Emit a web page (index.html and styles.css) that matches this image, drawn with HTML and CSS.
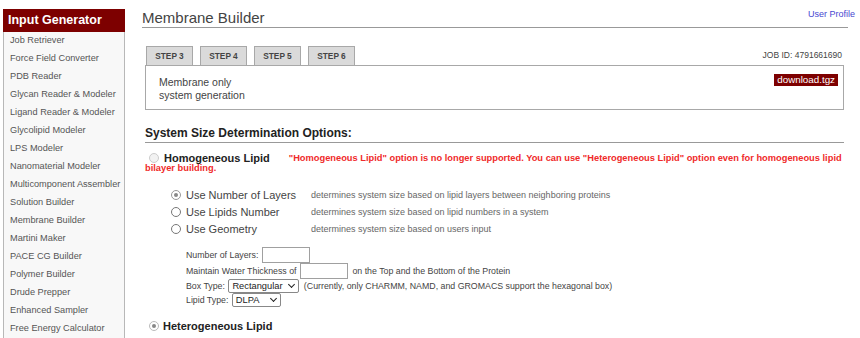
FILE: index.html
```html
<!DOCTYPE html>
<html>
<head>
<meta charset="utf-8">
<link rel="stylesheet" href="styles.css">
</head>
<body>
<div class="page">
  <nav class="sidebar">
    <div class="side-head">Input Generator</div>
    <ul class="side-list">
      <li>Job Retriever</li>
      <li>Force Field Converter</li>
      <li>PDB Reader</li>
      <li>Glycan Reader &amp; Modeler</li>
      <li>Ligand Reader &amp; Modeler</li>
      <li>Glycolipid Modeler</li>
      <li>LPS Modeler</li>
      <li>Nanomaterial Modeler</li>
      <li>Multicomponent Assembler</li>
      <li>Solution Builder</li>
      <li>Membrane Builder</li>
      <li>Martini Maker</li>
      <li>PACE CG Builder</li>
      <li>Polymer Builder</li>
      <li>Drude Prepper</li>
      <li>Enhanced Sampler</li>
      <li>Free Energy Calculator</li>
    </ul>
  </nav>
  <main class="main">
    <div class="title-row">
      <h1 class="title">Membrane Builder</h1>
      <a class="profile">User Profile</a>
    </div>
    <div class="tabs-row">
      <div class="tabs">
        <span class="tab">STEP 3</span>
        <span class="tab">STEP 4</span>
        <span class="tab">STEP 5</span>
        <span class="tab">STEP 6</span>
      </div>
      <div class="jobid">JOB ID: 4791661690</div>
    </div>
    <div class="stepbox">
      <div class="stepdesc">Membrane only<br>system generation</div>
      <span class="download">download.tgz</span>
    </div>
    <h2 class="section">System Size Determination Options:</h2>
    <div class="homo">
      <div class="homo-line">
        <span class="radio big disabled"></span>
        <span class="homo-label">Homogeneous Lipid</span>
        <span class="warn">"Homogeneous Lipid" option is no longer supported. You can use "Heterogeneous Lipid" option even for homogeneous lipid</span>
      </div>
      <div class="warn warn-cont">bilayer building.</div>
    </div>
    <div class="opts">
      <div class="opt"><span class="radio checked-gray"></span><span class="opt-label">Use Number of Layers</span><span class="opt-desc">determines system size based on lipid layers between neighboring proteins</span></div>
      <div class="opt"><span class="radio"></span><span class="opt-label">Use Lipids Number</span><span class="opt-desc">determines system size based on lipid numbers in a system</span></div>
      <div class="opt"><span class="radio"></span><span class="opt-label">Use Geometry</span><span class="opt-desc">determines system size based on users input</span></div>
    </div>
    <div class="fields">
      <div class="field">Number of Layers: <span class="input w48"></span></div>
      <div class="field">Maintain Water Thickness of <span class="input w48"></span> on the Top and the Bottom of the Protein</div>
      <div class="field">Box Type: <span class="select w71">Rectangular <span class="chev"></span></span> (Currently, only CHARMM, NAMD, and GROMACS support the hexagonal box)</div>
      <div class="field">Lipid Type: <span class="select w49">DLPA <span class="chev"></span></span></div>
    </div>
    <div class="hetero">
      <span class="radio big checked-gray"></span>
      <span class="homo-label">Heterogeneous Lipid</span>
    </div>
  </main>
</div>
</body>
</html>
```

FILE: styles.css
```css
* { box-sizing: border-box; }
html, body { margin: 0; padding: 0; background: #fff; }
body { font-family: "Liberation Sans", Arial, sans-serif; color: #333; overflow: hidden; width: 860px; height: 338px; }
.page { display: flex; align-items: flex-start; }
.sidebar {
  width: 122px;
  margin: 9px 0 0 3px;
  border: 1px solid #b8b8b8;
  border-top: none;
  background: #f8f8f8;
  flex: none;
}
.side-head {
  height: 23px;
  background: #7d0000;
  color: #fff;
  font-weight: bold;
  font-size: 12.5px;
  line-height: 23px;
  padding-left: 5px;
  margin: 0 -1px;
}
.side-list { list-style: none; margin: 0; padding: 0; }
.side-list li {
  font-size: 9.2px;
  color: #555;
  height: 18px;
  line-height: 17px;
  padding-left: 6px;
  white-space: nowrap;
}
.main { flex: 1; margin-left: 17px; margin-right: 5px; }
.title-row {
  display: flex;
  justify-content: space-between;
  align-items: flex-start;
  border-bottom: 1px solid #999;
  height: 28px;
  margin-right: 7px;
}
.title {
  margin: 9px 0 0 0;
  font-size: 15px;
  font-weight: normal;
  color: #444;
  line-height: 18px;
}
.profile { font-size: 9px; color: #4848d0; margin-top: 9px; margin-right: -7px; }
.tabs-row { display: flex; justify-content: space-between; align-items: flex-end; margin-top: 18px; margin-left: 4px; margin-right: 13px; }
.tabs { display: flex; gap: 7px; }
.tab {
  display: block;
  width: 47px;
  height: 19px;
  background: #dadada;
  border: 1px solid #a8a8a8;
  border-bottom: none;
  font-size: 8.3px;
  font-weight: bold;
  color: #444;
  text-align: center;
  line-height: 18px;
}
.jobid { font-size: 8.5px; color: #444; margin-bottom: 5px; }
.stepbox {
  margin-left: 3px;
  margin-right: 11px;
  height: 45px;
  border: 1px solid #a8a8a8;
  display: flex;
  justify-content: space-between;
  padding: 8px 8px 0 13px;
}
.stepdesc { font-size: 10.5px; color: #444; line-height: 12.5px; padding-top: 2px; }
.download {
  align-self: flex-start;
  background: #7d0000;
  color: #fff;
  font-size: 9.8px;
  line-height: 11px;
  height: 12px;
  padding: 0 3px;
  margin-right: -3px;
}
.section {
  margin: 16px 11px 0 3px;
  font-size: 12px;
  font-weight: bold;
  color: #222;
  border-bottom: 1px solid #999;
  padding-bottom: 2px;
  line-height: 14px;
}
.homo { margin: 9px 0 0 3px; font-size: 9.3px; padding-right: 6px; }
.homo-line { display: flex; align-items: center; height: 12px; white-space: nowrap; }
.radio {
  display: inline-block;
  width: 10px;
  height: 10px;
  border: 1px solid #777;
  border-radius: 50%;
  background: #fff;
  vertical-align: -1px;
  position: relative;
  flex: none;
}
.radio.disabled { border-color: #ccc; background: #f2f2f2; }
.radio.checked-gray { border-color: #999; }
.radio.checked-gray::after {
  content: "";
  position: absolute;
  left: 2px; top: 2px;
  width: 4px; height: 4px;
  border-radius: 50%;
  background: #888;
}
.homo .radio { margin-left: 4px; margin-right: 5px; }
.homo-label { font-size: 11px; font-weight: bold; color: #222; }
.homo .homo-label { margin-right: 19px; }
.warn { color: #f02a2a; font-weight: bold; font-size: 9.3px; }
.warn-cont { line-height: 11px; margin-top: -1px; }
.opts { margin: 12px 0 0 29px; }
.opt { display: flex; align-items: center; height: 17px; }
.opt .radio { margin-right: 5px; }
.opt-label { font-size: 11px; color: #444; width: 125px; }
.opt-desc { font-size: 9px; color: #666; }
.fields { margin: 10px 0 0 44px; font-size: 8.8px; color: #444; }
.field { display: flex; align-items: center; white-space: pre; height: 16px; }
.field:nth-child(3), .field:nth-child(4) { height: 14px; }
.input { display: inline-block; height: 16px; border: 1px solid #a0a0a0; background: #fff; margin: 0 2px 0 1px; }
.w48 { width: 48px; }
.select {
  display: inline-flex;
  align-items: center;
  justify-content: space-between;
  height: 14px;
  border: 1px solid #888;
  border-radius: 2px;
  font-size: 9.3px;
  color: #222;
  padding: 0 2px 0 3px;
  margin: 0 2px 0 1px;
}
.w71 { width: 71px; }
.w49 { width: 49px; }
.chev {
  display: inline-block;
  width: 5px; height: 5px;
  border-right: 1.5px solid #222;
  border-bottom: 1.5px solid #222;
  transform: rotate(45deg);
  margin: -3px 2px 0 0;
}
.hetero { margin: 13px 0 0 7px; display: flex; align-items: center; }
.hetero .radio { margin-right: 4px; border-color: #bbb; }
.hetero .homo-label { font-size: 11px; }
```
